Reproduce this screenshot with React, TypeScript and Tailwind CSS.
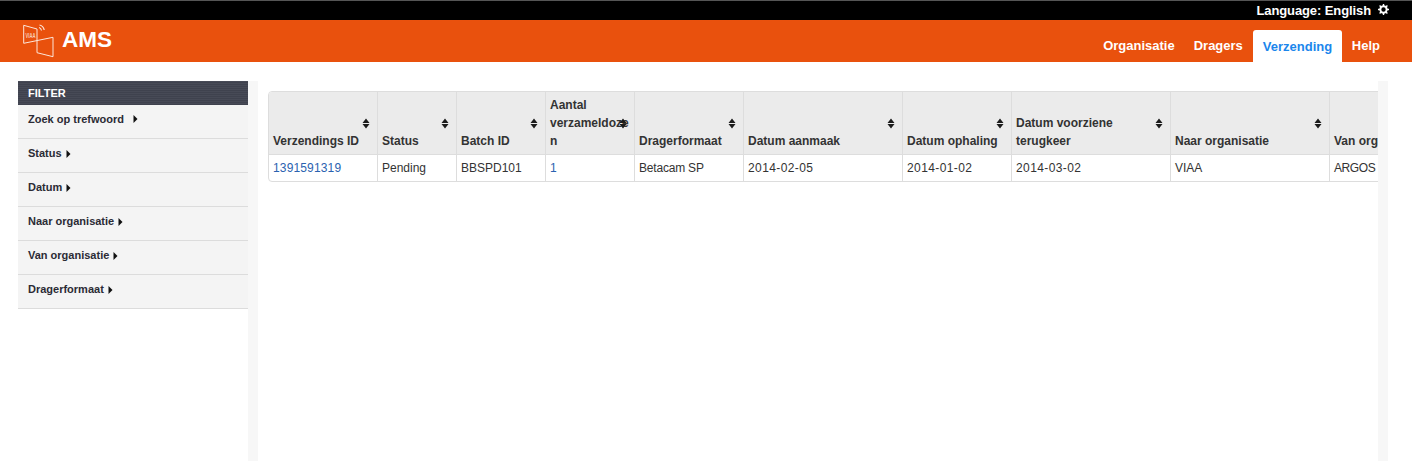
const font = { fontFamily: '"Liberation Sans", Arial, sans-serif' };

function Sort() {
  return (
    <svg width="8" height="11" viewBox="0 0 8 11" className="block">
      <path d="M4 0.5 L7.5 5 H0.5 Z M4 10.5 L7.5 6 H0.5 Z" fill="#1c1c1c" />
    </svg>
  );
}

function Caret() {
  return (
    <svg width="5" height="8" viewBox="0 0 5 8" className="ml-[4px] inline-block">
      <path d="M0.5 0 L4.5 4 L0.5 8 Z" fill="#111" />
    </svg>
  );
}

function Logo() {
  return (
    <svg width="34" height="36" viewBox="0 0 34 36" fill="none" stroke="#fde6da" strokeWidth="1" className="block">
      <path d="M2.7 20.3 V2.3 L16 6 V29.7 L32 33.7 V14.3 Z" />
      <path d="M18 4.5 Q20 5 20.5 7.5 M18.5 2 Q22.5 3 23.2 7" strokeWidth="1.2" />
      <text x="4.5" y="14.5" fontSize="6.5" fontWeight="bold" fill="#f8cdb6" stroke="none" textLength="10" lengthAdjust="spacingAndGlyphs" fontFamily="Liberation Sans, sans-serif">VIAA</text>
    </svg>
  );
}

const cols: { label: string[]; cell: string; w: number; link?: boolean; body?: string }[] = [
  { label: ['Verzendings ID'], cell: '1391591319', w: 108, link: true, body: 'tracking-[0.15px]' },
  { label: ['Status'], cell: 'Pending', w: 79 },
  { label: ['Batch ID'], cell: 'BBSPD101', w: 89 },
  { label: ['Aantal', 'verzameldoze', 'n'], cell: '1', w: 89, link: true },
  { label: ['Dragerformaat'], cell: 'Betacam SP', w: 109, body: 'tracking-[-0.2px]' },
  { label: ['Datum aanmaak'], cell: '2014-02-05', w: 159, body: 'tracking-[0.4px]' },
  { label: ['Datum ophaling'], cell: '2014-01-02', w: 109, body: 'tracking-[0.4px]' },
  { label: ['Datum voorziene', 'terugkeer'], cell: '2014-03-02', w: 159, body: 'tracking-[0.4px]' },
  { label: ['Naar organisatie'], cell: 'VIAA', w: 159 },
  { label: ['Van organisatie'], cell: 'ARGOS', w: 120, body: 'tracking-[-0.4px]' },
];

const filters = ['Zoek op trefwoord', 'Status', 'Datum', 'Naar organisatie', 'Van organisatie', 'Dragerformaat'];

export default function App() {
  return (
    <div className="h-[461px] w-[1412px] overflow-hidden bg-white text-[#333]" style={font}>
      <div className="flex h-[20px] items-center justify-end border-t border-[#555] bg-black pr-[23px] text-[13px] font-bold text-white">
        <span className="tracking-[-0.1px]">Language: English</span>
        <svg width="11" height="11" viewBox="0 0 11 11" className="mb-[2px] ml-[7px]">
          <circle cx="5.5" cy="5.5" r="3.2" fill="none" stroke="#fff" strokeWidth="2" />
          <path d="M5.5 0v2M5.5 9v2M0 5.5h2M9 5.5h2M1.6 1.6l1.4 1.4M8 8l1.4 1.4M1.6 9.4L3 8M8 3l1.4-1.4" stroke="#fff" strokeWidth="1.4" />
        </svg>
      </div>

      <div className="flex h-[42px] items-end justify-between bg-[#e9510d] pl-[21px] pr-[32px]">
        <div className="flex h-full items-start pt-[3px]">
          <Logo />
          <span className="ml-[7px] mt-[4px] text-[22.5px] leading-[26px] font-bold text-white">AMS</span>
        </div>
        <nav className="flex items-end text-[13px] font-bold text-white">
          <span className="mr-[19px] pb-[7px]">Organisatie</span>
          <span className="mr-[10px] pb-[7px]">Dragers</span>
          <span className="w-[89px] rounded-t-[3px] bg-white pl-[10px] pt-[9px] pb-[7px] leading-[16px] text-[#1b86ec]">Verzending</span>
          <span className="ml-[10px] pb-[7px]">Help</span>
        </nav>
      </div>

      <div className="mt-[19px] flex h-[380px] pl-[18px]">
        <aside className="w-[230px] shrink-0">
          <div className="flex h-[24px] items-center bg-[repeating-linear-gradient(0deg,#3f424e_0px,#3f424e_1px,#474a56_1px,#474a56_2px)] pl-[10px] text-[11px] font-bold text-white">
            FILTER
          </div>
          {filters.map((f, i) => (
            <div
              key={f}
              className={`flex items-center border-b border-[#dcdcdc] bg-[#f4f4f4] pl-[10px] text-[11px] font-bold text-[#2b2b35] ${i === 0 ? 'h-[34px] pb-[5px]' : 'h-[34px] pb-[4px]'}`}
            >
              <span>{f}</span>
              {i === 0 ? <span className="w-[5px]" /> : null}
              <Caret />
            </div>
          ))}
        </aside>

        <div className="w-[10px] shrink-0 bg-[#f7f7f7]" />

        <main className="w-[1120px] shrink-0 overflow-hidden pl-[10px] pt-[10px]">
          <div className="w-[1182px] overflow-hidden rounded-[4px] border border-[#dddddd]">
            <table className="w-[1180px] table-fixed border-separate border-spacing-0 text-[12px] leading-[18px]">
              <colgroup>
                {cols.map((c) => (
                  <col key={c.cell} style={{ width: c.w }} />
                ))}
              </colgroup>
              <thead>
                <tr className="h-[62px] bg-[#ebebeb]">
                  {cols.map((c, i) => (
                    <th
                      key={c.cell}
                      className={`relative overflow-visible p-0 pb-[4px] pl-[4px] text-left align-bottom text-[12px] font-bold leading-[18px] text-[#333] ${i ? 'border-l border-[#dddddd]' : ''}`}
                    >
                      {c.label.map((l) => (
                        <div key={l} className="whitespace-nowrap">{l}</div>
                      ))}
                      {i < 9 ? (
                        <span className="absolute right-[7px] top-[26px]">
                          <Sort />
                        </span>
                      ) : null}
                    </th>
                  ))}
                </tr>
              </thead>
              <tbody>
                <tr className="h-[27px]">
                  {cols.map((c, i) => (
                    <td
                      key={c.cell}
                      className={`border-t border-[#dddddd] p-0 pl-[4px] align-middle whitespace-nowrap ${c.body ?? ''} ${i ? 'border-l' : ''} ${c.link ? 'text-[#2a62b0]' : 'text-[#333]'}`}
                    >
                      {c.cell}
                    </td>
                  ))}
                </tr>
              </tbody>
            </table>
          </div>
        </main>

        <div className="w-[10px] shrink-0 bg-[#f7f7f7]" />
      </div>
    </div>
  );
}
